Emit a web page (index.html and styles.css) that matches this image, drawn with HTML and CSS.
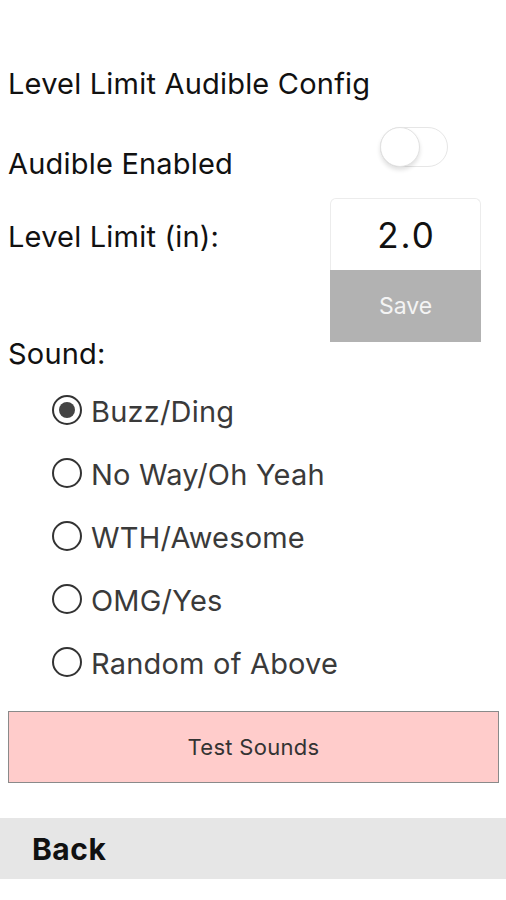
FILE: index.html
```html
<!DOCTYPE html>
<html>
<head>
<meta charset="utf-8">
<link rel="stylesheet" href="styles.css">
</head>
<body>
<main class="page">
  <h1 class="title">Level Limit Audible Config</h1>
  <div class="settings">
    <div class="label label-audible">Audible Enabled</div>
    <div class="cell">
      <span class="toggle"><span class="knob"></span></span>
    </div>
    <div class="label label-limit">Level Limit (in):</div>
    <div class="cell stack">
      <div class="value-box">2.0</div>
      <div class="save-btn">Save</div>
    </div>
  </div>
  <div class="sound-label">Sound:</div>
  <ul class="radios">
    <li class="radio-row"><span class="radio checked"></span><span class="radio-text">Buzz/Ding</span></li>
    <li class="radio-row"><span class="radio"></span><span class="radio-text">No Way/Oh Yeah</span></li>
    <li class="radio-row"><span class="radio"></span><span class="radio-text">WTH/Awesome</span></li>
    <li class="radio-row"><span class="radio"></span><span class="radio-text">OMG/Yes</span></li>
    <li class="radio-row"><span class="radio"></span><span class="radio-text">Random of Above</span></li>
  </ul>
  <div class="test-btn">Test Sounds</div>
</main>
<nav class="back-bar"><span class="back-text">Back</span></nav>
</body>
</html>
```
FILE: styles.css
```css
html, body {
  margin: 0;
  padding: 0;
  background: #fff;
}
body {
  width: 506px;
  height: 900px;
  font-family: Inter, "Liberation Sans", Arial, sans-serif;
  color: #111;
}
.page {
  padding: 67px 7px 0 8px;
}
.title {
  margin: 0 0 26px 0;
  font-size: 29px;
  letter-spacing: 0.2px;
  font-weight: 400;
  line-height: 34px;
}
.settings {
  display: grid;
  grid-template-columns: 322px 151px;
  row-gap: 17px;
}
.label {
  font-size: 29px;
  letter-spacing: 0.2px;
  line-height: 34px;
}
.label-audible {
  padding-top: 20px;
}
.label-limit {
  padding-top: 22px;
}
.cell {
  display: flex;
}
.toggle {
  display: block;
  position: relative;
  width: 68px;
  height: 40px;
  margin-left: 50px;
  box-sizing: border-box;
  border: 1.5px solid #e6e6e6;
  border-radius: 20px;
  background: #fff;
}
.knob {
  position: absolute;
  left: -1.5px;
  top: -1.5px;
  width: 40px;
  height: 40px;
  box-sizing: border-box;
  border-radius: 50%;
  border: 1px solid #e2e2e2;
  background: #fff;
  box-shadow: 0 3px 4px rgba(0,0,0,0.12);
}
.stack {
  flex-direction: column;
}
.value-box {
  height: 72px;
  box-sizing: border-box;
  border: 1px solid #ececec;
  border-bottom: none;
  border-radius: 6px 6px 0 0;
  display: flex;
  align-items: center;
  justify-content: center;
  font-size: 35px;
  letter-spacing: 2px;
  padding-left: 2px;
  color: #111;
}
.save-btn {
  height: 72px;
  background: #b2b2b2;
  color: #f4f4f4;
  display: flex;
  align-items: center;
  justify-content: center;
  font-size: 23px;
}
.sound-label {
  font-size: 29px;
  letter-spacing: 0.2px;
  line-height: 24px;
}
.radios {
  list-style: none;
  margin: 12px 0 0 0;
  padding: 0 0 0 44px;
}
.radio-row {
  height: 63px;
  display: flex;
  align-items: center;
  gap: 9px;
}
.radio {
  width: 30px;
  height: 30px;
  box-sizing: border-box;
  border: 2.5px solid #333;
  border-radius: 50%;
  flex: none;
  display: flex;
  align-items: center;
  justify-content: center;
}
.radio.checked::after {
  content: "";
  width: 16px;
  height: 16px;
  border-radius: 50%;
  background: #444;
}
.radio-text {
  font-size: 29px;
  letter-spacing: 0.2px;
  color: #3a3a3a;
  line-height: 34px;
  padding-top: 4px;
}
.test-btn {
  margin-top: 18px;
  width: 491px;
  height: 72px;
  box-sizing: border-box;
  border: 1.5px solid #8a8a8a;
  background: #ffcccb;
  display: flex;
  align-items: center;
  justify-content: center;
  font-size: 22px;
  letter-spacing: 0.3px;
  color: #333;
}
.back-bar {
  margin-top: 35px;
  height: 61px;
  background: #e6e6e6;
  display: flex;
  align-items: center;
  padding-left: 32px;
}
.back-text {
  font-size: 30px;
  letter-spacing: 0.5px;
  font-weight: 700;
  color: #111;
}
```
